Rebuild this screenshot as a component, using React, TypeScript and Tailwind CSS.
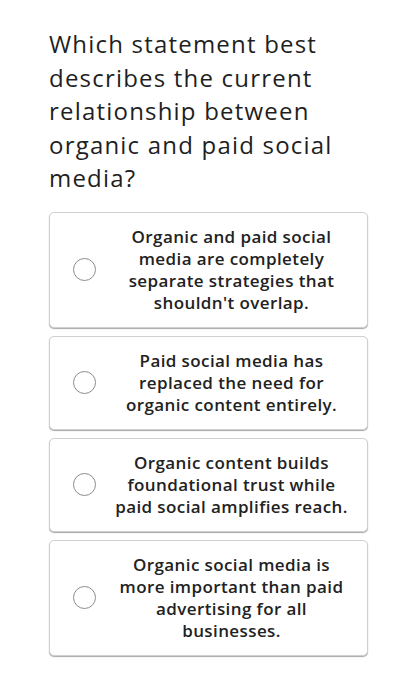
import * as React from "react";

const options = [
  {
    id: "a",
    lines: [
      "Organic and paid social",
      "media are completely",
      "separate strategies that",
      "shouldn't overlap.",
    ],
  },
  {
    id: "b",
    lines: [
      "Paid social media has",
      "replaced the need for",
      "organic content entirely.",
    ],
  },
  {
    id: "c",
    lines: [
      "Organic content builds",
      "foundational trust while",
      "paid social amplifies reach.",
    ],
  },
  {
    id: "d",
    lines: [
      "Organic social media is",
      "more important than paid",
      "advertising for all",
      "businesses.",
    ],
  },
];

export default function App() {
  const [selected, setSelected] = React.useState<string | null>(null);

  return (
    <div className="min-h-screen bg-white px-[49px] pt-[27px] font-['Open_Sans',sans-serif] text-[#1f1f1f]">
      <h1 className="text-[24px] leading-[33.5px] font-normal tracking-[1.2px]">
        Which statement best describes the current relationship between organic
        and paid social media?
      </h1>

      <ul role="list" className="mt-[17px] flex flex-col gap-2">
        {options.map((opt) => {
          const isActive = selected === opt.id;
          return (
            <li key={opt.id}>
              <button
                type="button"
                onClick={() => setSelected(opt.id)}
                className="flex w-full items-center gap-3 rounded-[5px] border border-[#cfcfcf] bg-white py-[13px] pl-[23px] pr-3 shadow-[0_1px_1px_rgba(0,0,0,0.35)]"
              >
                <span className="flex h-[23px] w-[23px] shrink-0 items-center justify-center rounded-full border-[1.5px] border-[#8c8c8c]">
                  {isActive && (
                    <span className="h-3 w-3 rounded-full bg-[#1f1f1f]" />
                  )}
                </span>
                <span className="flex-1 text-center text-[17px] leading-[22px] font-semibold tracking-[0.4px] text-[#222]">
                  {opt.lines.map((line) => (
                    <span key={line} className="block whitespace-nowrap">
                      {line}
                    </span>
                  ))}
                </span>
              </button>
            </li>
          );
        })}
      </ul>
    </div>
  );
}
